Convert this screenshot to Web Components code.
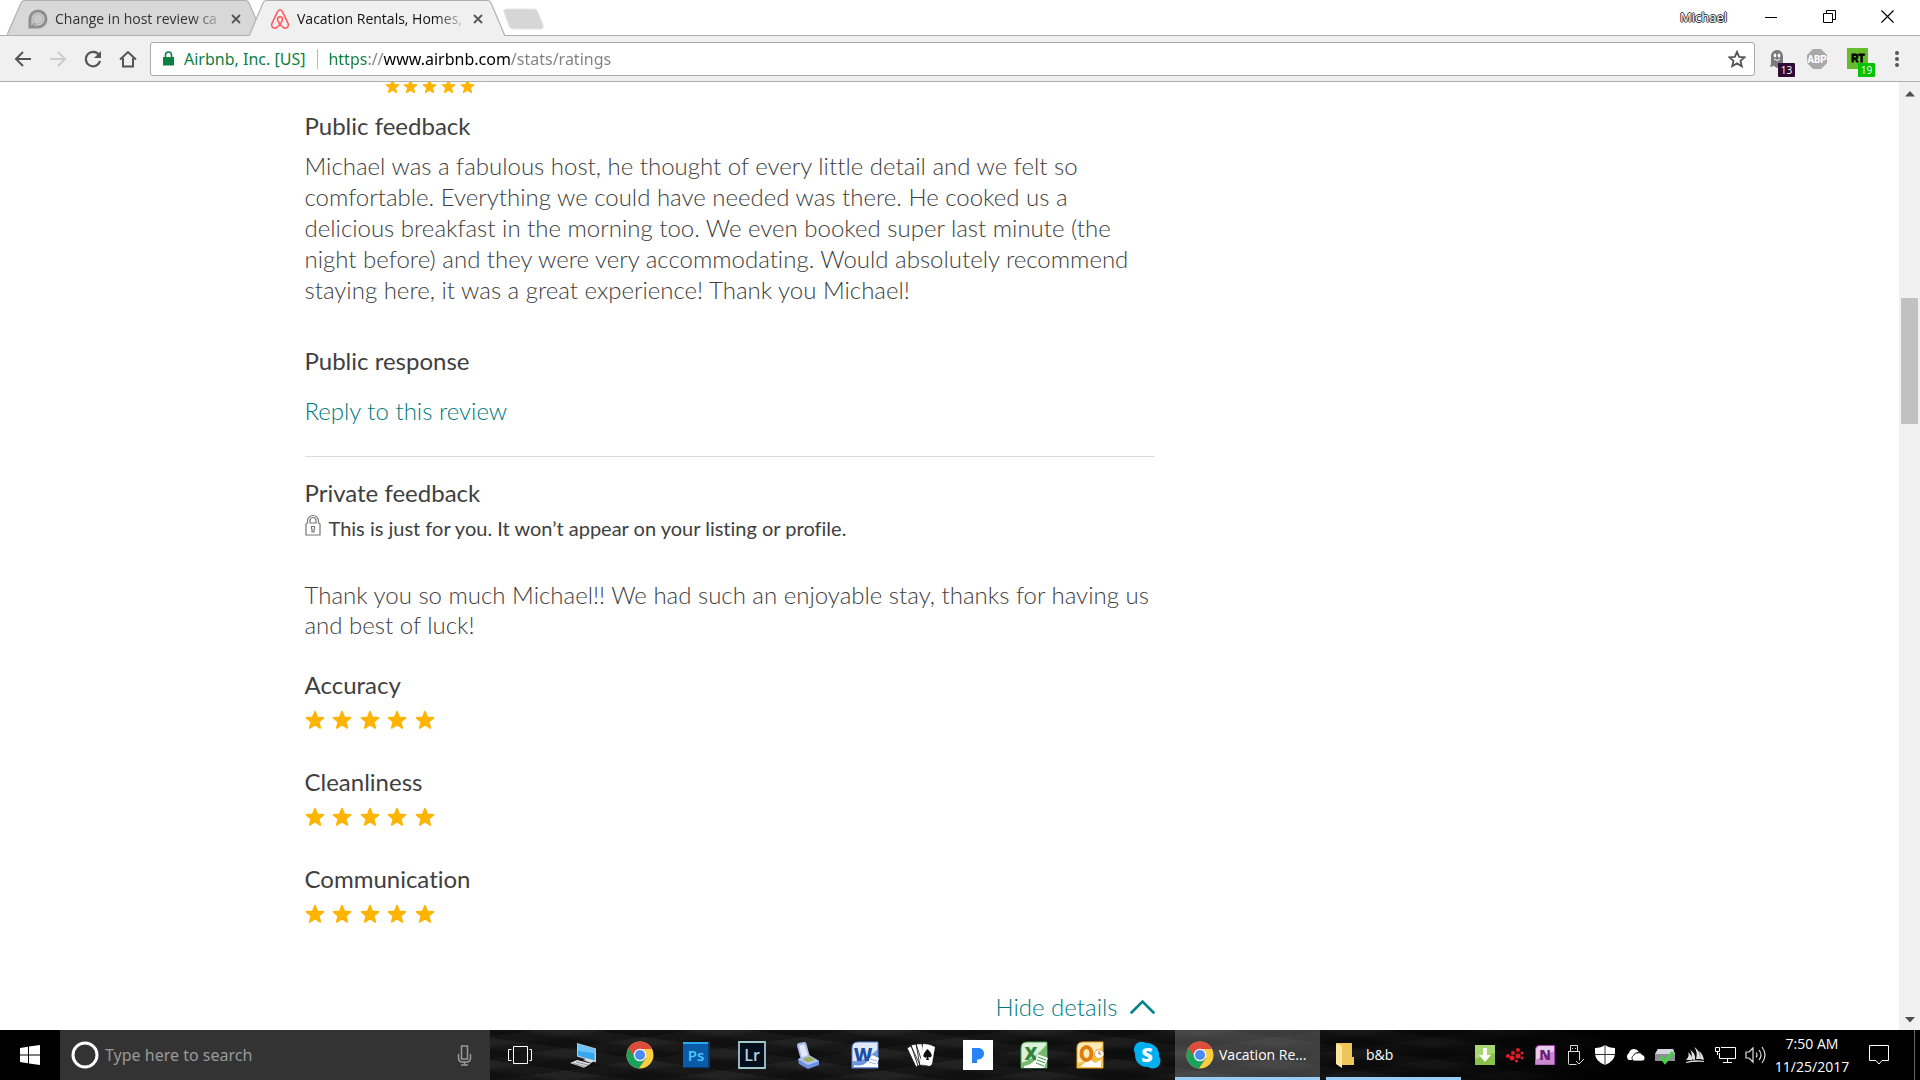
<!DOCTYPE html>
<html lang="en">
<head>
<meta charset="utf-8">
<title>Vacation Rentals, Homes</title>
<style>
  html, body {
    height: 100%;
    margin: 0;
  }
  body {
    display: flex;
    flex-direction: column;
    overflow: hidden;
    background: #fff;
    font-family: 'Open Sans', 'Noto Sans', sans-serif;
  }
</style>
</head>
<body>
<tab-strip>
  <browser-tab label="Change in host review ca" icon="discourse"></browser-tab>
  <browser-tab label="Vacation Rentals, Homes," icon="airbnb" active></browser-tab>
</tab-strip>
<browser-toolbar></browser-toolbar>
<page-viewport>
  <review-details></review-details>
</page-viewport>
<task-bar></task-bar>

<script>
// Shared icon markup, keyed by name
const ICONS = {
  discourse: `<svg width="20" height="20" viewBox="0 0 20 20" fill="none"><path d="M2 18V10a8 8 0 1 1 8 8z" stroke="#8e8e8e" stroke-width="3"/><path d="M5 15.500V10a5 5 0 1 1 5 5z" fill="#c9c9c9" stroke="#aaa" stroke-width="1"/><path d="M4 17l3-3M14 5l2-2" stroke="#777"/></svg>`,
  airbnb: `<svg width="22" height="22" viewBox="0 0 24 24" fill="none" stroke="#ff5a5f" stroke-width="1.700"><path d="M12 2c-1.500 0-2.200 1-3.200 3L3.200 16.800c-1.200 2.700.4 5.200 3 5.200 2.100 0 4-1.800 5.800-4.200 1.500-2 2.700-3.900 2.700-5.500a2.700 2.700 0 0 0-5.400 0c0 1.600 1.200 3.500 2.700 5.500 1.800 2.400 3.700 4.200 5.800 4.200 2.600 0 4.200-2.500 3-5.200L15.200 5c-1-2-1.700-3-3.200-3z"/></svg>`,
  chrome: `<svg width="28" height="28" viewBox="0 0 28 28"><circle cx="14" cy="14" r="13.500" fill="#ffcd41"/><path d="M14 14L2.300 7.300A13.500 13.500 0 0 0 12.800 27.500L19.800 17.400z" fill="#1aa15f"/><path d="M2.300 7.200A13.500 13.500 0 0 1 26 8H14a6 6 0 0 0-5.300 8.500z" fill="#dd4b3e"/><circle cx="14" cy="14" r="6.300" fill="#f4f4f4"/><circle cx="14" cy="14" r="5" fill="#4a8af4"/></svg>`,
  monitor: `<svg width="28" height="28" viewBox="0 0 28 28"><path d="M8 2l19 5.500v14L8 15.500z" fill="#b8cbd6"/><path d="M9 3.500l16.500 4.800v11.500L9 14.500z" fill="#36a6ee"/><path d="M9 3.500l16.500 4.800v4L9 10z" fill="#6cc4fa"/><path d="M14 19l4-1.500 8 2-4 2.500zM1 22l7-3 14 3.500-7 4.200z" fill="#d9dee2"/><path d="M4 22.500l12 3M7 21l12 3" stroke="#8b9298" fill="none"/></svg>`,
  ps: `<svg width="28" height="28" viewBox="0 0 28 28"><path d="M1 1h27v26H1z" fill="#06386f"/><path d="M1 1h25v25H1z" fill="#0a5cab"/><path d="M1 1h25v2H1z" fill="#2aa9ef"/><text x="14" y="20" text-anchor="middle" font-size="15" font-weight="600" fill="#4cc9fb">Ps</text></svg>`,
  lr: `<svg width="28" height="28" viewBox="0 0 28 28"><path d="M1 1h26v26H1z" fill="#030d1c" stroke="#a4c6cd" stroke-width="1.800"/><text x="14" y="20" text-anchor="middle" font-size="16" font-weight="600" fill="#b5d2d6">Lr</text></svg>`,
  scanner: `<svg width="28" height="28" viewBox="0 0 28 28"><path d="M2 5q0-3 2-3l5-1q2-.3 2.500 2L15 16l-9 3z" fill="#a9bbe8"/><path d="M4 4.500l5-1.500L13.500 15 7 17z" fill="#e3e9fb"/><path d="M3 18l11-4 10 6v4l-11 4-9-5z" fill="#6d92e2"/><path d="M3 18l11-4 10 6-11 4z" fill="#b4c5f3"/><path d="M7 18l8-2.500 5 3.500-7 2.500z" fill="#9cb05a"/></svg>`,
  word: `<svg width="28" height="28" viewBox="0 0 28 28"><path d="M7 1h20v26H1V7q0-6 6-6z" fill="#dfe9fa" stroke="#527bcb" stroke-width="1"/><path d="M1 20q12 2 26-12v19H1z" fill="#6e96de"/><path d="M3 24q9 2 14-4l10 3v3H3z" fill="#fff"/><text x="12" y="20" text-anchor="middle" font-size="18" font-weight="800" fill="#1d4ea6">W</text><path d="M18 18l3-4 7 3-3 9-7-2z" fill="#fff"/><path d="M19 18l7 2M18 21l7 2" stroke="#93b1e3"/></svg>`,
  cards: `<svg width="30" height="28" viewBox="0 0 30 28" fill="#fff"><path d="M1 7l4-2 9 19-4 2zM5 4l5-1 7 21-5 1zM10 3l6-.3 3 22-5 .3z" stroke="#111" stroke-width=".8"/><path d="M17 3q7 0 12 3l-3 17q-1 2-3 2l-9-2z"/><path d="M21.500 8q-5 5-4 7.500 1.500 2 3.500.5l-1 3h3l-.8-3q2.500 1.200 3.500-1 .5-2.500-4.200-7z" fill="#111"/></svg>`,
  pandora: `<svg width="30" height="30" viewBox="0 0 30 30"><path d="M0 0h30v30H0z" fill="#fff"/><path d="M9 8h6c4 0 6 2.500 6 5.800 0 3.700-3 5.800-7 5.800V23H9z" fill="#2684f8"/></svg>`,
  excel: `<svg width="28" height="28" viewBox="0 0 28 28"><path d="M7 1h20v26H1V7q0-6 6-6z" fill="#dcefd9" stroke="#3c9a4a" stroke-width="1"/><path d="M1 22Q14 19 27 3v24H1z" fill="#74b96c"/><path d="M4 25q7-1 11-6l9 8H4z" fill="#fff"/><text x="11" y="19" text-anchor="middle" font-size="18" font-weight="800" fill="#328538">X</text><path d="M17 13l11 4-4 10-9-3z" fill="#fff"/><path d="M18 16l8 3M17 19l8 3M16 22l8 3" stroke="#4ea158" stroke-width="1.300"/></svg>`,
  outlook: `<svg width="28" height="28" viewBox="0 0 28 28"><path d="M7 1h20v26H1V7q0-6 6-6z" fill="#fdecb8" stroke="#eaa31f" stroke-width="1"/><path d="M1 22Q18 20 27 3v24H1z" fill="#f6bf45"/><path d="M4 26l9-8 6 4 6-3v7z" fill="#fff"/><ellipse cx="10.500" cy="12.500" rx="5" ry="6.500" fill="none" stroke="#e07d10" stroke-width="4"/><circle cx="23" cy="13" r="4.500" fill="#fff" stroke="#e3a25c"/><path d="M23 10v3h2" stroke="#c35a1a" fill="none"/></svg>`,
  skype: `<svg width="28" height="28" viewBox="0 0 28 28"><circle cx="14" cy="14" r="12" fill="#00aff0"/><circle cx="8.500" cy="8.500" r="7.700" fill="#00aff0"/><circle cx="19.800" cy="19.800" r="7.700" fill="#00aff0"/><text x="14" y="21" text-anchor="middle" font-size="20" font-weight="800" fill="#fff">S</text></svg>`,
  folder: `<svg width="20" height="28" viewBox="0 0 20 28"><path d="M2 2h15v14h2v8H2z" fill="#edc65b"/><path d="M1 2l6 3v22l-6-4z" fill="#ffe79c"/></svg>`,
  star: `<svg viewBox="0 0 20 20"><path d="M10 1.500l2.300 5.900 6.200.4-4.800 4 1.600 6.200-5.300-3.400L4.700 18l1.600-6.200-4.800-4 6.200-.4z" fill="#ffb400" stroke="#ffb400" stroke-width="1.600" stroke-linejoin="round"/></svg>`
};

class TabStrip extends HTMLElement {
  connectedCallback() {
    this.attachShadow({ mode: 'open' });
    this.shadowRoot.innerHTML = `
      <style>
        :host {
          display: flex;
          flex: none;
          height: 35px;
          padding-left: 7px;
          border-bottom: 1px solid #b0b0b0;
          background: #fff;
        }
        button {
          border: 0;
          padding: 0;
          background: none;
        }
        .new-tab {
          display: flex;
          align-items: center;
          margin-left: -5px;
          padding-top: 2px;
        }
        .window {
          display: flex;
          align-items: center;
          height: 33px;
          margin-left: auto;
          padding-right: 4px;
        }
        .user {
          margin-right: 15px;
          color: #fff;
          font: 13px 'Open Sans', sans-serif;
          text-shadow: 1px 0 #333, -1px 0 #333, 0 1px #333, 0 -1px #333;
        }
        .window .control {
          display: flex;
          justify-content: center;
          width: 58px;
        }
      </style>
      <slot></slot>
      <button class="new-tab" aria-label="New tab">
        <svg width="46" height="24" viewBox="0 0 46 24"><path d="M6 2h28q3 0 4 3l5 13q1 4-3 4H13q-3 0-4-3L4 5q-1-3 2-3z" fill="#d6d6d6" stroke="#e6e6e6"/></svg>
      </button>
      <div class="window">
        <button class="user">Michael</button>
        <button class="control" aria-label="Minimize"><svg width="12" height="12"><path d="M0 6.500h12" stroke="#000"/></svg></button>
        <button class="control" aria-label="Restore"><svg width="13" height="13" fill="none" stroke="#000"><path d="M.5 3.500h9v9h-9zM3.500 3V.5h9v9H10"/></svg></button>
        <button class="control" aria-label="Close"><svg width="13" height="13" fill="none" stroke="#000" stroke-width="1.200"><path d="M.5.5l12 12M12.500.5l-12 12"/></svg></button>
      </div>
    `;
  }
}
customElements.define('tab-strip', TabStrip);

class BrowserTab extends HTMLElement {
  connectedCallback() {
    const active = this.hasAttribute('active');
    const fill = active ? '#f0f0f0' : '#d8d8d8';
    this.attachShadow({ mode: 'open' });
    this.shadowRoot.innerHTML = `
      <style>
        :host {
          display: flex;
          align-items: center;
          position: relative;
          box-sizing: border-box;
          width: 256px;
          height: 36px;
          padding: 2px 18px 0 20px;
          color: #333;
          font-size: 14px;
        }
        :host([active]) {
          margin-left: -14px;
          color: #111;
        }
        .shape {
          position: absolute;
          inset: 0;
          width: 100%;
          height: 100%;
        }
        .icon, .label, button {
          position: relative;
        }
        .icon {
          display: flex;
          justify-content: center;
          width: 22px;
        }
        .label {
          flex: 1;
          margin-left: 6px;
          white-space: nowrap;
          line-height: 20px;
          -webkit-mask-image: linear-gradient(90deg, #000 80%, transparent);
          mask-image: linear-gradient(90deg, #000 80%, transparent);
        }
        button {
          display: flex;
          border: 0;
          padding: 4px;
          background: none;
        }
      </style>
      <svg class="shape" viewBox="0 0 256 36" preserveAspectRatio="none">
        <path d="M0 ${active ? 36 : 35}L14 3q1-2.500 4-2.500h220q3 0 4 2.500l14 ${active ? 33 : 32}" fill="${fill}" stroke="#b0b0b0" stroke-width="1.200"/>
      </svg>
      <span class="icon">${ICONS[this.getAttribute('icon')]}</span>
      <span class="label">${this.getAttribute('label')}</span>
      <button aria-label="Close tab"><svg width="10" height="10" stroke="#555" stroke-width="1.800"><path d="M1 1l8 8M9 1L1 9"/></svg></button>
    `;
  }
}
customElements.define('browser-tab', BrowserTab);

class BrowserToolbar extends HTMLElement {
  connectedCallback() {
    this.attachShadow({ mode: 'open' });
    this.shadowRoot.innerHTML = `
      <style>
        :host {
          display: flex;
          flex: none;
          align-items: center;
          height: 45px;
          padding: 0 3px 0 5px;
          border-bottom: 1px solid #b0b0b0;
          background: #f0f0f0;
        }
        button {
          display: flex;
          align-items: center;
          justify-content: center;
          position: relative;
          flex: none;
          width: 35px;
          height: 34px;
          border: 0;
          padding: 0;
          background: none;
        }
        .extension, .menu {
          width: 40px;
        }
        .omnibox {
          display: flex;
          flex: 1;
          align-items: center;
          box-sizing: border-box;
          height: 34px;
          margin: 0 2px 0 5px;
          border: 1px solid #a9a9a9;
          border-radius: 3px;
          background: #fff;
          font: 16px 'Noto Sans', sans-serif;
        }
        .lock {
          margin: 0 10px 0 12px;
        }
        .site {
          padding-right: 12px;
          border-right: 1px solid #bbb;
          color: #0b8043;
          line-height: 20px;
        }
        input {
          flex: 1;
          min-width: 0;
          border: 0;
          padding: 0;
          margin-left: 10px;
          outline: 0;
          font: inherit;
          color: transparent;
          background: linear-gradient(90deg,
            #0b8043 var(--scheme), #808080 var(--scheme) var(--slashes),
            #000 var(--slashes) var(--host), #808080 var(--host));
          -webkit-background-clip: text;
          background-clip: text;
        }
        .badge {
          position: absolute;
          left: 21px;
          top: 21px;
          width: 17px;
          border-radius: 1px;
          color: #fff;
          font: 10px/14px 'Open Sans', sans-serif;
          text-align: center;
        }
      </style>
      <button aria-label="Back"><svg width="18" height="18" fill="none" stroke="#555" stroke-width="2"><path d="M17 9H2M9 2L2 9l7 7"/></svg></button>
      <button aria-label="Forward"><svg width="18" height="18" fill="none" stroke="#ccc" stroke-width="2"><path d="M1 9h15M9 2l7 7-7 7"/></svg></button>
      <button aria-label="Reload"><svg width="18" height="18" fill="none" stroke="#555" stroke-width="2.200"><path d="M15 5A7.200 7.200 0 1 0 16 11"/><path d="M17 1v7h-7z" fill="#555" stroke="none"/></svg></button>
      <button aria-label="Home"><svg width="18" height="18" fill="none" stroke="#555" stroke-width="2"><path d="M1 9.500L9 2l8 7.500M4 8v8.500h10V8"/></svg></button>
      <div class="omnibox">
        <svg class="lock" width="11" height="15"><path d="M0 6h11v8.500H0z" fill="#0b8043"/><path d="M2.500 7V4a3 3 0 0 1 6 0v3" fill="none" stroke="#0b8043" stroke-width="1.600"/></svg>
        <span class="site">Airbnb, Inc. [US]</span>
        <input type="text" aria-label="Address" value="https://www.airbnb.com/stats/ratings">
        <button aria-label="Bookmark this page"><svg width="18" height="18" viewBox="0 0 20 20" fill="none" stroke="#555" stroke-width="2"><path d="M10 2l2.400 5.600 6.100.5-4.600 4 1.400 6-5.300-3.200L4.700 18l1.400-6-4.600-4 6.100-.4z"/></svg></button>
      </div>
      <button class="extension" aria-label="Ghostery, 13 trackers">
        <svg width="16" height="20"><path d="M2 15V7a6 6 0 0 1 12 0v12l-3-2-3 2-3-2-4 1z" fill="#7a7a7f"/><ellipse cx="6" cy="6.500" rx="1.300" ry="2" fill="#fff"/><ellipse cx="10" cy="6.500" rx="1.300" ry="2" fill="#fff"/><path d="M5 10q3 3 6 0" stroke="#fff" fill="none"/></svg>
        <span class="badge" style="background:#2f0a36">13</span>
      </button>
      <button class="extension" aria-label="Adblock Plus">
        <svg width="22" height="22"><path d="M7 1h8l6 6v8l-6 6H7l-6-6V7z" fill="#a9a9a9"/><text x="11" y="15" text-anchor="middle" font-family="Roboto, sans-serif" font-size="10" font-weight="800" fill="#fff">ABP</text></svg>
      </button>
      <button class="extension" aria-label="RT, 19 new">
        <svg width="21" height="21"><path d="M0 0h21v21H0z" fill="#67bb2c"/><text x="11" y="14" text-anchor="middle" font-size="10" font-weight="800" fill="#000" stroke="#000" stroke-width=".8">RT</text></svg>
        <span class="badge" style="background:#00c400">19</span>
      </button>
      <button class="menu" aria-label="Menu"><svg width="4" height="16" fill="#555"><circle cx="2" cy="2" r="2"/><circle cx="2" cy="8" r="2"/><circle cx="2" cy="14" r="2"/></svg></button>
    `;
    this.colourUrl();
  }

  // Find where scheme, slashes and host end, so that each gets its own colour
  colourUrl() {
    const input = this.shadowRoot.querySelector('input');
    const context = document.createElement('canvas').getContext('2d');
    context.font = "16px 'Noto Sans'";
    const parts = { '--scheme': 'https', '--slashes': 'https://', '--host': 'https://www.airbnb.com' };
    for (const name in parts) {
      input.style.setProperty(name, Math.round(context.measureText(parts[name]).width) + 'px');
    }
  }
}
customElements.define('browser-toolbar', BrowserToolbar);

class PageViewport extends HTMLElement {
  connectedCallback() {
    this.attachShadow({ mode: 'open' });
    this.shadowRoot.innerHTML = `
      <style>
        :host {
          display: flex;
          flex: 1;
          min-height: 0;
        }
        .page {
          flex: 1;
          overflow: hidden;
        }
        .scrollbar {
          display: flex;
          flex-direction: column;
          align-items: center;
          box-sizing: border-box;
          width: 21px;
          padding: 9px 0 7px;
          background: #f1f1f1;
        }
        .before {
          flex: 200;
        }
        .thumb {
          flex: 126;
          width: 17px;
          background: #c1c1c1;
        }
        .after {
          flex: 590;
        }
      </style>
      <div class="page"><slot></slot></div>
      <div class="scrollbar">
        <svg width="10" height="6"><path d="M0 5.500L5 0l5 5.500z" fill="#505050"/></svg>
        <div class="before"></div>
        <div class="thumb"></div>
        <div class="after"></div>
        <svg width="10" height="6"><path d="M0 0l5 5.500L10 0z" fill="#505050"/></svg>
      </div>
    `;
  }
}
customElements.define('page-viewport', PageViewport);

class StarRating extends HTMLElement {
  connectedCallback() {
    this.attachShadow({ mode: 'open' });
    this.shadowRoot.innerHTML = `
      <style>
        :host {
          display: flex;
          justify-content: space-between;
          width: 130px;
        }
        svg {
          width: 20px;
          height: 20px;
        }
        :host([small]) {
          width: 90px;
        }
        :host([small]) svg {
          width: 15px;
          height: 15px;
        }
      </style>
      ${ICONS.star.repeat(5)}
    `;
    this.setAttribute('role', 'img');
    this.setAttribute('aria-label', '5 out of 5 stars');
  }
}
customElements.define('star-rating', StarRating);

class RatingItem extends HTMLElement {
  connectedCallback() {
    this.attachShadow({ mode: 'open' });
    this.shadowRoot.innerHTML = `
      <style>
        :host {
          display: block;
        }
        h3 {
          margin: 0 0 9px;
          font-size: 24px;
          font-weight: 400;
          line-height: 32px;
        }
      </style>
      <h3><slot></slot></h3>
      <star-rating></star-rating>
    `;
  }
}
customElements.define('rating-item', RatingItem);

class ReviewDetails extends HTMLElement {
  connectedCallback() {
    this.attachShadow({ mode: 'open' });
    this.shadowRoot.innerHTML = `
      <style>
        :host {
          display: block;
          max-width: 1290px;
          margin: 0 auto;
          color: #404040;
          font: 300 24px/31px Lato, sans-serif;
          font-variant-ligatures: none;
        }
        .column {
          display: flex;
          flex-direction: column;
          max-width: 850px;
        }
        .overall {
          display: flex;
          align-items: flex-end;
          height: 12px;
          padding-left: 80px;
          margin-bottom: 16px;
          overflow: hidden;
        }
        h2 {
          margin: 0;
          font-size: 24px;
          font-weight: 400;
          line-height: 32px;
        }
        p {
          margin: 0;
        }
        a {
          color: #007a80;
          text-decoration: none;
        }
        .feedback {
          margin: 8px 0 40px;
        }
        .reply {
          padding: 18px 0 30px;
          margin-bottom: 20px;
          border-bottom: 1px solid #dbdbdb;
        }
        .private-note {
          display: flex;
          align-items: flex-start;
          gap: 8px;
          margin: 5px 0 38px;
          font-size: 20px;
          font-weight: 400;
          line-height: 28px;
        }
        .private {
          line-height: 30px;
          margin-bottom: 29px;
        }
        .ratings {
          display: flex;
          flex-direction: column;
          gap: 36px;
        }
        .toggle {
          display: flex;
          align-items: center;
          align-self: flex-end;
          gap: 12px;
          border: 0;
          padding: 0;
          margin-top: 67px;
          background: none;
          color: #007a80;
          font: inherit;
        }
      </style>
      <div class="column">
        <div class="overall"><star-rating small></star-rating></div>
        <h2>Public feedback</h2>
        <p class="feedback">Michael was a fabulous host, he thought of every little detail and we felt so<br>
          comfortable. Everything we could have needed was there. He cooked us a<br>
          delicious breakfast in the morning too. We even booked super last minute (the<br>
          night before) and they were very accommodating. Would absolutely recommend<br>
          staying here, it was a great experience! Thank you Michael!</p>
        <h2>Public response</h2>
        <p class="reply"><a href="#reply">Reply to this review</a></p>
        <h2>Private feedback</h2>
        <p class="private-note">
          <svg width="16" height="22" fill="none" stroke="#767676" stroke-width="1.200"><path d="M2.500 9V7a5.500 5.500 0 0 1 11 0v2l1.500 1v11H1V10z"/><path d="M5 9V6.500a3 3 0 0 1 6 0V9zM6.500 12.500h3v2l-.5.8v2.700H7v-2.700l-.5-.8z"/></svg>
          This is just for you. It won’t appear on your listing or profile.
        </p>
        <p class="private">Thank you so much Michael!! We had such an enjoyable stay, thanks for having us<br>
          and best of luck!</p>
        <div class="ratings">
          <rating-item>Accuracy</rating-item>
          <rating-item>Cleanliness</rating-item>
          <rating-item>Communication</rating-item>
        </div>
        <button class="toggle">Hide details
          <svg width="25" height="15" fill="none" stroke="#008489" stroke-width="2.600" stroke-linecap="round"><path d="M1.500 13.500l11-11 11 11"/></svg>
        </button>
      </div>
    `;
  }
}
customElements.define('review-details', ReviewDetails);

class TaskBar extends HTMLElement {
  connectedCallback() {
    const apps = {
      monitor: 'Remote Desktop', chrome: 'Chrome', ps: 'Photoshop', lr: 'Lightroom', scanner: 'Scanner', word: 'Word',
      cards: 'Solitaire', pandora: 'Pandora', excel: 'Excel', outlook: 'Outlook', skype: 'Skype'
    };
    this.attachShadow({ mode: 'open' });
    this.shadowRoot.innerHTML = `
      <style>
        :host {
          display: flex;
          flex: none;
          height: 50px;
          color: #fff;
          font: 14px/20px 'Open Sans', sans-serif;
          background:
            repeating-linear-gradient(8deg, rgba(0, 0, 0, .35) 0 9px, transparent 14px 22px),
            repeating-linear-gradient(-8deg, rgba(0, 0, 0, .3) 0 9px, transparent 14px 22px),
            linear-gradient(90deg, #222 0 50%, #141414 75%, #000 85%);
        }
        button {
          display: flex;
          align-items: center;
          justify-content: center;
          border: 0;
          padding: 0;
          background: none;
          color: inherit;
          font: inherit;
        }
        .start {
          width: 60px;
          background: #000;
        }
        .search {
          display: flex;
          align-items: center;
          box-sizing: border-box;
          width: 430px;
          padding: 0 17px 0 11px;
          background: #333;
        }
        .search input {
          flex: 1;
          min-width: 0;
          border: 0;
          padding: 0;
          margin-left: 6px;
          outline: 0;
          background: none;
          color: #fff;
          font: 16px/24px 'Noto Sans', sans-serif;
        }
        .search input::placeholder {
          color: #999;
          opacity: 1;
        }
        .view {
          width: 60px;
        }
        .apps {
          display: flex;
          width: 620px;
          margin-left: 5px;
        }
        .apps button {
          flex: 1;
        }
        .task {
          justify-content: flex-start;
          box-sizing: border-box;
          border-bottom: 3px solid #99cdf8;
          padding: 3px 0 0 11px;
          gap: 5px;
          width: 145px;
        }
        .task.active {
          background: rgba(255, 255, 255, .2);
        }
        .task.files {
          width: 135px;
          margin-left: 6px;
          padding-left: 9px;
          gap: 11px;
        }
        .tray {
          display: flex;
          margin-left: auto;
        }
        .tray button {
          width: 30px;
        }
        .tray .clock {
          flex-direction: column;
          width: 84px;
          line-height: 23px;
        }
        .tray .notifications {
          width: 50px;
        }
        .desktop {
          width: 5px;
          margin-left: 10px;
          border-left: 1px solid #666;
        }
      </style>
      <button class="start" aria-label="Start"><svg width="20" height="20" fill="#fff"><path d="M0 3l8-1.200V9.500H0zM9 1.600L20 0v9.500H9zM0 10.500h8v7.700L0 17zM9 10.500h11V20L9 18.400z"/></svg></button>
      <div class="search">
        <svg width="28" height="28" fill="none"><circle cx="14" cy="14" r="12" stroke="#fff" stroke-width="3"/></svg>
        <input type="text" aria-label="Search" placeholder="Type here to search">
        <button aria-label="Speak"><svg width="16" height="21" fill="none" stroke="#999" stroke-width="1.500"><path d="M4.500 1h6v13h-6zM1.500 9v4q0 4 4 4h4q4 0 4-4V9M7.500 17v3M4 20h7"/></svg></button>
      </div>
      <button class="view" aria-label="Task view"><svg width="24" height="20" fill="none" stroke="#fff"><path d="M5.500 1.500h14v17h-14zM3.500 4.500h-3v11h3M21.500 4.500h2v11h-2"/></svg></button>
      <div class="apps">${Object.keys(apps).map(name => `<button aria-label="${apps[name]}">${ICONS[name]}</button>`).join('')}</div>
      <button class="task active">${ICONS.chrome}Vacation Re...</button>
      <button class="task files">${ICONS.folder}b&amp;b</button>
      <div class="tray">
        <button aria-label="Downloads"><svg width="20" height="20"><path d="M0 0h20v20H0z" fill="#8ac249"/><path d="M0 0h20v8L0 14z" fill="#a8d670"/><path d="M8 3h4v7h4l-6 7-6-7h4z" fill="#fff"/></svg></button>
        <button aria-label="Raspberry"><svg width="20" height="20" fill="#e31b23"><circle cx="3" cy="11" r="2"/><circle cx="8" cy="8" r="2"/><circle cx="7" cy="13" r="2.500"/><circle cx="13" cy="11" r="2.500"/><circle cx="13" cy="5" r="2"/><circle cx="17" cy="8" r="1.600"/><circle cx="11.500" cy="16" r="1.600"/><circle cx="17" cy="13" r="1.400"/></svg></button>
        <button aria-label="OneNote"><svg width="20" height="20"><path d="M5 .5h14.500v19H.5V5Q.5.500 5 .5z" fill="#e8cdea" stroke="#a438a8"/><path d="M.5 15L19 6v13.500H.5z" fill="#c98bce"/><text x="10" y="15" text-anchor="middle" font-size="14" font-weight="800" fill="#6f1f7a">N</text></svg></button>
        <button aria-label="Safely remove hardware"><svg width="17" height="20" fill="none" stroke="#ddd"><path d="M3.500 6V.5h7V6M1.500 6.500h11v9M1.500 6v12.500q0 1 1 1h7M5.500 3v1M8.500 3v1M9 16l3 3 5-5"/></svg></button>
        <button aria-label="Security"><svg width="20" height="20"><path d="M10 0q4 3 10 3v5q0 8-10 12Q0 16 0 8V3q6 0 10-3z" fill="#fff"/><path d="M10 0v20M0 9.500h20" stroke="#333"/></svg></button>
        <button aria-label="OneDrive"><svg width="20" height="14"><path d="M4 12a4 4 0 0 1 0-7q1-4 5-4 3 0 5 3-6 0-7 8z" fill="#fff"/><path d="M9 13a3 3 0 0 1-.5-5.500Q10 4 13 5q2-1.500 4 1.500 3 .5 3 3.500t-3 3z" fill="#fff" stroke="#111" stroke-width=".8"/></svg></button>
        <button aria-label="Drive status"><svg width="22" height="20"><path d="M4 4h15l2 5v7H1V9z" fill="#8d8f98"/><path d="M4 4h15l2 5H1z" fill="#d4d6dd"/><path d="M7 12l4 5 8-10" fill="none" stroke="#46d048" stroke-width="3.500"/></svg></button>
        <button aria-label="Corsair"><svg width="18" height="18" fill="#ddd"><path d="M0 14Q4 10 2 6q4 3 4 8zM5 13q2-5-1-9 6 3 5 10zM10 13q2-7-2-12 7 4 6 12zM14 13q1-4-1-8 4 3 5 9zM0 16q7-3 18-1v1q-9-1-18 1z"/></svg></button>
        <button aria-label="Network"><svg width="21" height="18" fill="none" stroke="#fff"><path d="M6 1.500h14.500v11H4.500V7M12.500 13v3M8 16.500h9M.5 1.500h4v4h-4zM2.500 5.500V9"/></svg></button>
        <button aria-label="Volume"><svg width="21" height="20" fill="none" stroke="#ddd" stroke-width="1.200"><path d="M1 7h3l4-4v14l-4-4H1zM11 7.500q2 2.500 0 5M14 5q4 5 0 10M17 2q6 8 0 16"/></svg></button>
        <button class="clock"><span>7:50 AM</span><span>11/25/2017</span></button>
        <button class="notifications" aria-label="Notifications"><svg width="20" height="20" fill="none" stroke="#fff"><path d="M.5.500h19v15H13L10 19l-3-3.500H.5z"/></svg></button>
        <div class="desktop"></div>
      </div>
    `;
  }
}
customElements.define('task-bar', TaskBar);
</script>
</body>
</html>
